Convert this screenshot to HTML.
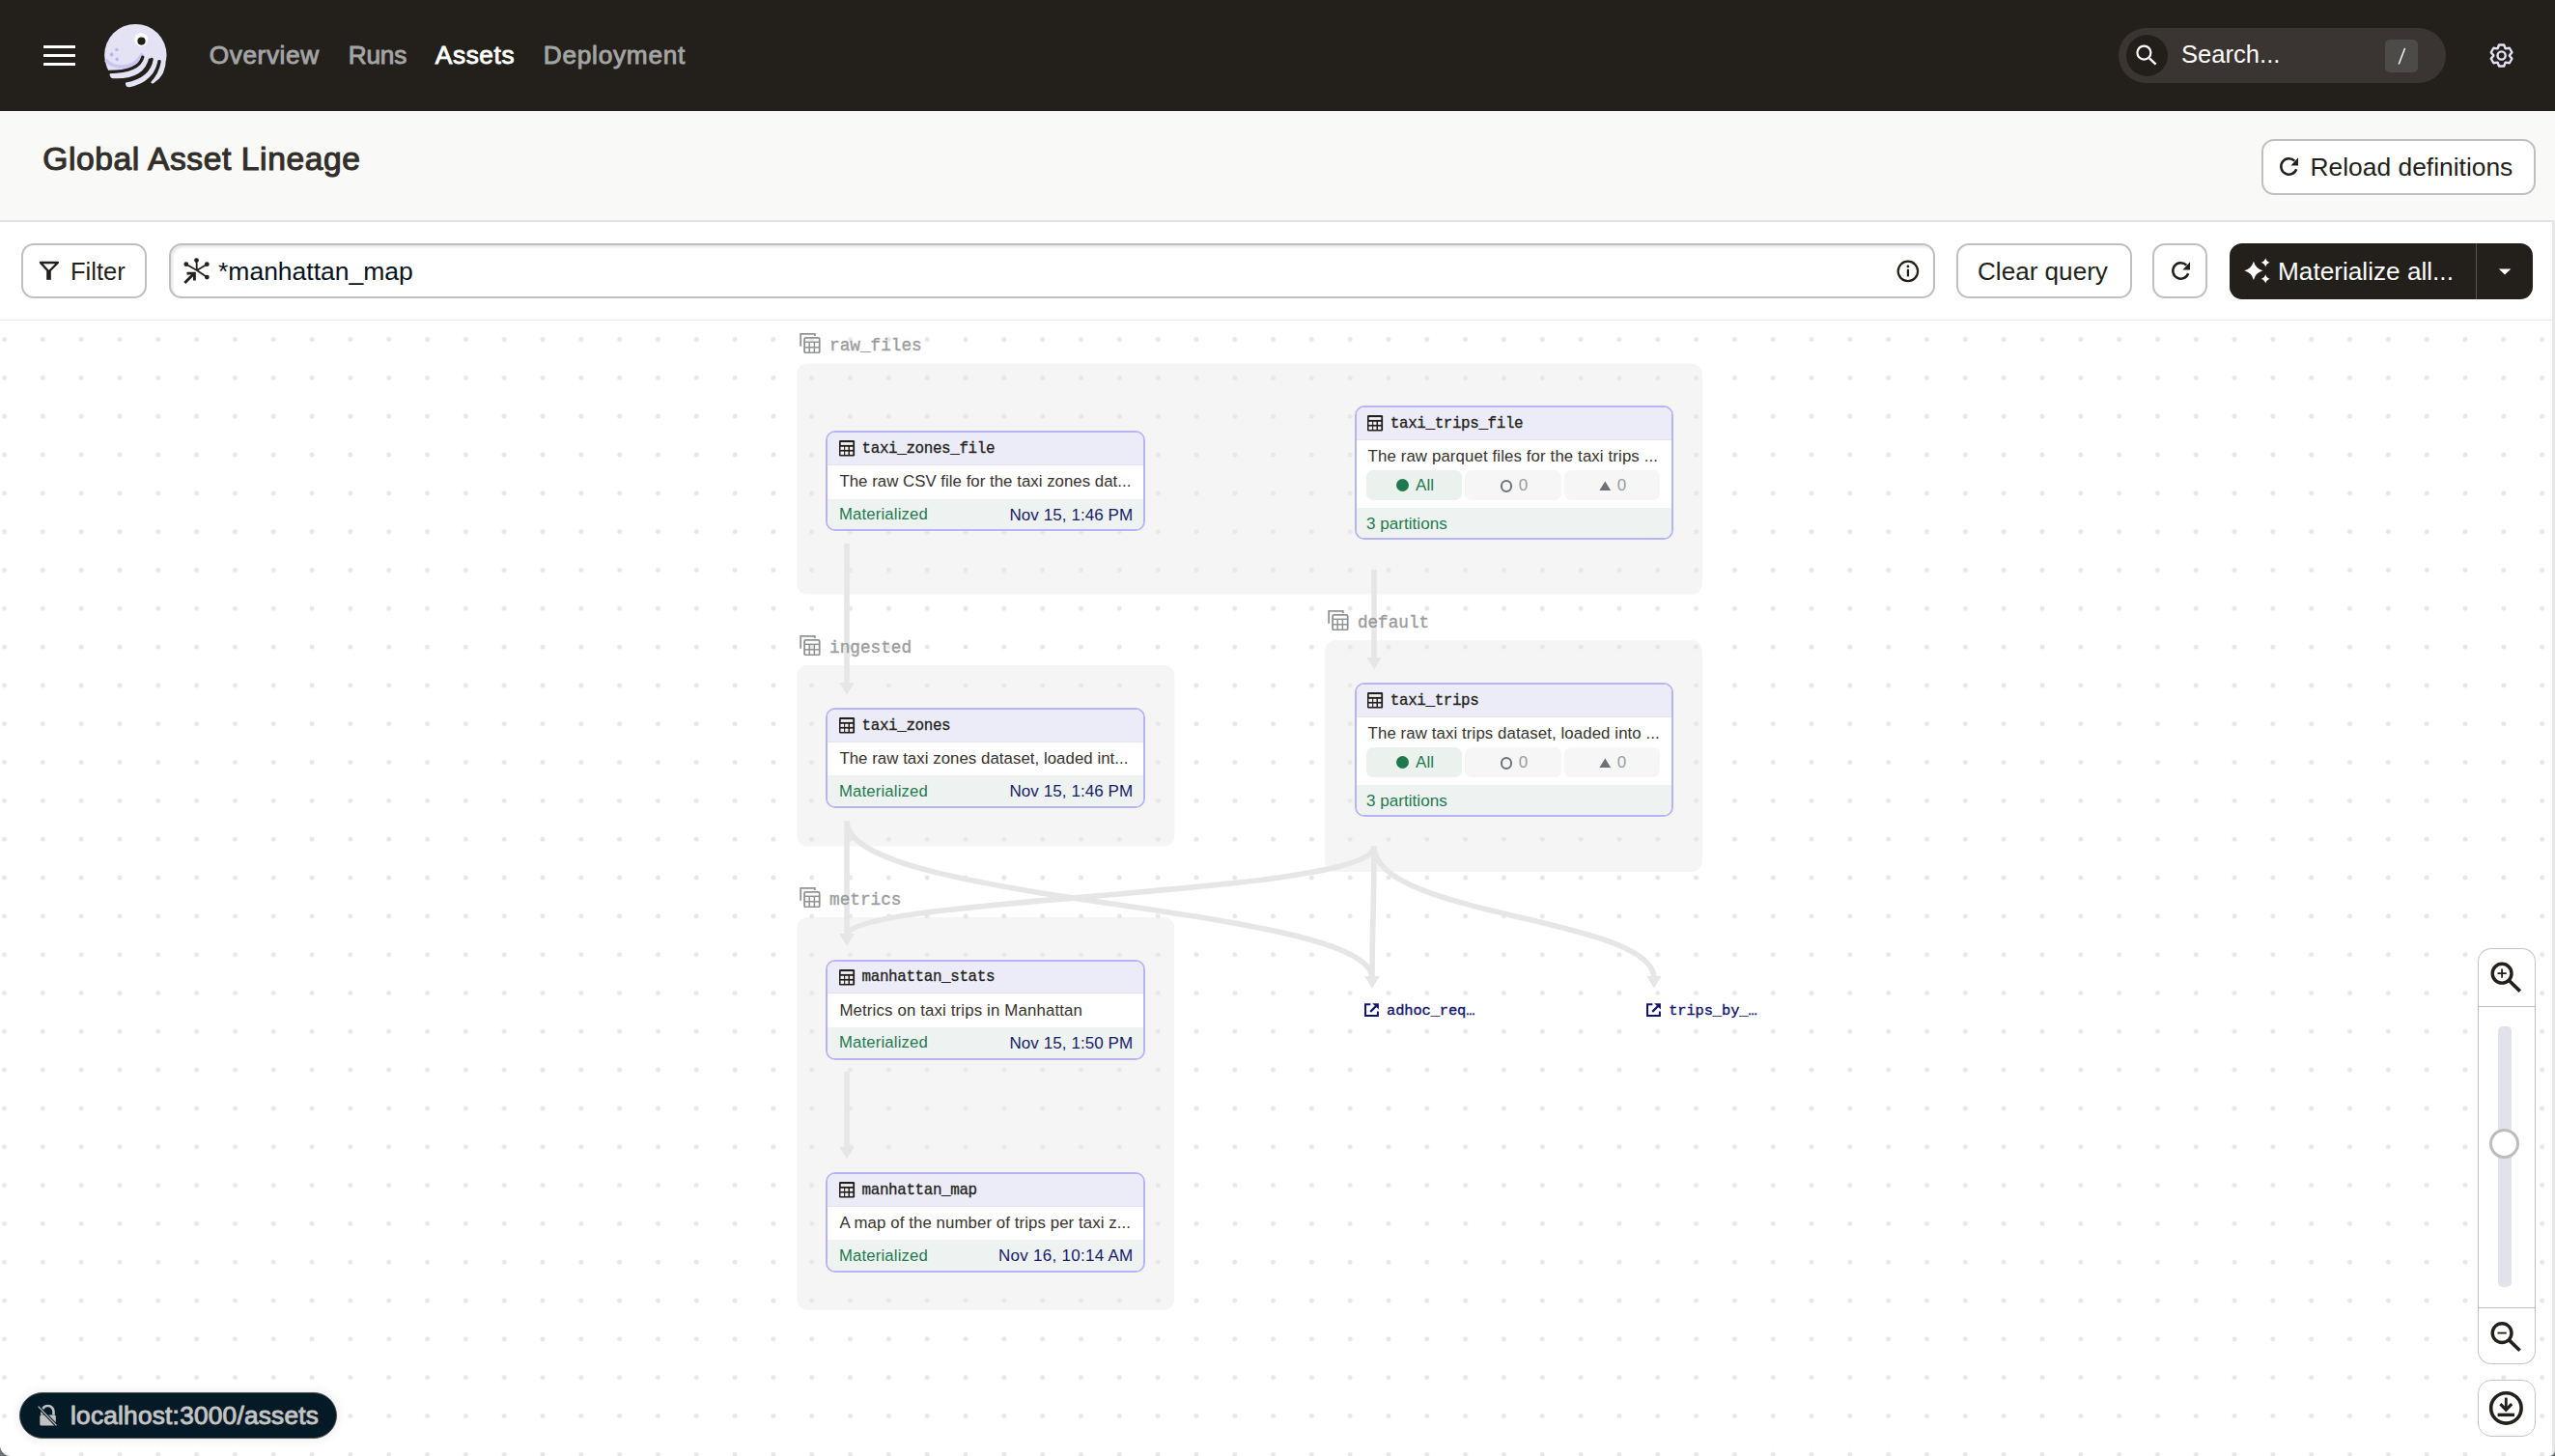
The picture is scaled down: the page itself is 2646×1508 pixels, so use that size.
<!DOCTYPE html>
<html><head><meta charset="utf-8"><title>Global Asset Lineage</title>
<style>
html,body{margin:0;padding:0;width:2646px;height:1508px;overflow:hidden;background:#fff}
body{position:relative;font-family:"Liberation Sans", sans-serif}
.t{position:absolute;white-space:nowrap;line-height:1}
.s{font-family:"Liberation Sans", sans-serif}
.m{font-family:"Liberation Mono", monospace}
</style></head><body>
<div style="position:absolute;left:0;top:0;width:2646px;height:115px;background:#231F1B"></div>
<div style="position:absolute;left:45px;top:46.7px;width:33px;height:3.3px;background:#fff;border-radius:0.5px"></div>
<div style="position:absolute;left:45px;top:55.8px;width:33px;height:3.3px;background:#fff;border-radius:0.5px"></div>
<div style="position:absolute;left:45px;top:64.8px;width:33px;height:3.3px;background:#fff;border-radius:0.5px"></div>
<svg style="position:absolute;left:100px;top:18px" width="80" height="80" viewBox="0 0 80 80">
<defs><clipPath id="lbody"><path d="M0 0 L80 0 L80 44 L65.1 45 L57.1 43 L47.8 41.2 C 45.5 50, 36 56.5, 13 56.5 L0 56.5 Z"/></clipPath>
<clipPath id="lcirc"><circle cx="40.35" cy="39.1" r="34.5"/></clipPath></defs>
<circle cx="40.35" cy="39.1" r="32.2" fill="#E4E3F4" clip-path="url(#lbody)"/>
<g clip-path="url(#lcirc)" fill="none" stroke="#E4E3F4" stroke-linecap="round" stroke-width="7.2">
<path d="M51 40 C 48.5 53, 38 60.5, 17.2 59.6"/>
<path d="M60.5 42 C 58.8 56, 49 66, 33.6 68.6"/>
<path d="M68.4 42 C 68.2 53, 64 61, 59.2 65.4"/>
</g>
<path d="M9.5 44 C 18 53.5, 38 55.5, 47.5 37.5" fill="none" stroke="#CAC5F3" stroke-width="3.6" clip-path="url(#lbody)"/>
<g fill="none" stroke="#231F1B" stroke-linecap="round" stroke-width="3.3">
<path d="M47.8 41.2 C 45.5 50, 36 56.5, 13 56.5"/>
<path d="M57.1 43.4 C 55 56, 45 63, 30 66"/>
<path d="M65.1 45.6 C 63.5 55, 60 61, 54 67"/>
</g>
<circle cx="46.2" cy="23.2" r="7" fill="#fff"/>
<circle cx="46.5" cy="24.6" r="4.1" fill="#231F1B"/>
<circle cx="20.9" cy="33.5" r="1.8" fill="#B9B3F0"/><circle cx="15.7" cy="38.5" r="1.9" fill="#B9B3F0"/><circle cx="21.2" cy="43.4" r="1.8" fill="#B9B3F0"/>
</svg>
<div class="t s" style="left:216.80px;top:43.72px;font-size:26.2px;color:#A3A5A5;font-weight:400;-webkit-text-stroke:0.9px #A3A5A5;letter-spacing:0.59px;">Overview</div>
<div class="t s" style="left:360.80px;top:43.72px;font-size:26.2px;color:#A3A5A5;font-weight:400;-webkit-text-stroke:0.9px #A3A5A5;letter-spacing:-0.2px;">Runs</div>
<div class="t s" style="left:450.80px;top:43.72px;font-size:26.2px;color:#FFFFFF;font-weight:400;-webkit-text-stroke:0.9px #FFFFFF;letter-spacing:0.64px;">Assets</div>
<div class="t s" style="left:562.80px;top:43.72px;font-size:26.2px;color:#A3A5A5;font-weight:400;-webkit-text-stroke:0.9px #A3A5A5;letter-spacing:0.75px;">Deployment</div>
<div style="position:absolute;left:2194px;top:29px;width:339px;height:57px;border-radius:28.5px;background:#3A3532"></div>
<div style="position:absolute;left:2202px;top:36px;width:43px;height:43px;border-radius:50%;background:#221F1B"></div>
<svg style="position:absolute;left:2195px;top:30px" width="60" height="56" viewBox="0 0 60 56">
<circle cx="25.4" cy="24.6" r="7" fill="none" stroke="#fff" stroke-width="2.2"/>
<path d="M31 30.3 L37.6 36.6" stroke="#fff" stroke-width="2.4" stroke-linecap="butt"/></svg>
<div class="t s" style="left:2259.00px;top:43.72px;font-size:25.6px;color:#FFFFFF;font-weight:400;">Search...</div>
<div style="position:absolute;left:2470px;top:41px;width:34px;height:34px;border-radius:5px;background:#4D4B49"></div>
<svg style="position:absolute;left:2470px;top:41px" width="34" height="34"><path d="M20.6 9 L14.2 25.5" stroke="#fff" stroke-width="1.4"/></svg>
<svg style="position:absolute;left:2570px;top:37px" width="40" height="40" viewBox="0 0 40 40">
<path d="M16.61 13.22 L18.02 9.50 L23.18 9.50 L24.59 13.22 L24.91 13.41 L28.84 12.77 L31.42 17.23 L28.90 20.31 L28.90 20.69 L31.42 23.77 L28.84 28.23 L24.91 27.59 L24.59 27.78 L23.18 31.50 L18.02 31.50 L16.61 27.78 L16.29 27.59 L12.36 28.23 L9.78 23.77 L12.30 20.69 L12.30 20.31 L9.78 17.23 L12.36 12.77 L16.29 13.41 Z" fill="none" stroke="#E4E3F5" stroke-width="2.4" stroke-linejoin="round"/>
<circle cx="20.6" cy="20.5" r="4.1" fill="none" stroke="#E4E3F5" stroke-width="2.4"/></svg>
<div style="position:absolute;left:0;top:115px;width:2646px;height:113px;background:#F9F9F7"></div>
<div style="position:absolute;left:0;top:228px;width:2646px;height:1.5px;background:#E3E3E3"></div>
<div class="t s" style="left:44.20px;top:147.95px;font-size:33.6px;color:#322E2A;font-weight:400;-webkit-text-stroke:1.1px #322E2A;letter-spacing:0.6px;">Global Asset Lineage</div>
<div style="position:absolute;left:2342px;top:144px;width:284px;height:58px;box-sizing:border-box;border:2px solid #BFBFBF;border-radius:13px;background:#fff"></div>
<svg style="position:absolute;left:2357.8px;top:160.2px" width="26" height="26" viewBox="-3 -3 26 26">
<path d="M15.3 3.65 A8.2 8.2 0 1 0 17.2 12.25" fill="none" stroke="#231F1B" stroke-width="2.5"/>
<path d="M11.5 8.4 L19 8.4 L19 0.3 Z" fill="#231F1B"/></svg>
<div class="t s" style="left:2392.50px;top:159.65px;font-size:26.4px;color:#231F1B;font-weight:400;">Reload definitions</div>
<div style="position:absolute;left:0;top:229.5px;width:2643px;height:102px;background:#fff"></div>
<div style="position:absolute;left:0;top:330.5px;width:2643px;height:1.5px;background:#E6E6E6"></div>
<div style="position:absolute;left:2643px;top:228px;width:3px;height:1280px;background:#E7E7E7"></div>
<div style="position:absolute;left:22px;top:252px;width:130px;height:57px;box-sizing:border-box;border:2px solid #BFBFBF;border-radius:13px;background:#fff"></div>
<svg style="position:absolute;left:30px;top:260px" width="40" height="40" viewBox="0 0 40 40">
<path d="M12 12 L29.9 12 L20.5 21.5 Z" fill="none" stroke="#231F1B" stroke-width="2.4" stroke-linejoin="round"/>
<path d="M20.5 21 L20.5 29.8" stroke="#231F1B" stroke-width="4.6"/></svg>
<div class="t s" style="left:73.00px;top:268.91px;font-size:25.5px;color:#231F1B;font-weight:400;">Filter</div>
<div style="position:absolute;left:175px;top:252px;width:1829px;height:57px;box-sizing:border-box;border:2px solid #BFBFBF;border-radius:13px;background:#fff;box-shadow:inset 2px 2px 3px rgba(0,0,0,0.10)"></div>
<svg style="position:absolute;left:180px;top:260px" width="50" height="40" viewBox="0 0 50 40">
<g stroke="#231F1B" stroke-width="1.8"><path d="M23.9 20 L23.5 9.6"/><path d="M23.9 20 L12.8 13.7"/><path d="M23.9 20 L34.3 13.7"/><path d="M23.9 20 L34.3 27.1"/></g>
<g fill="#231F1B"><circle cx="23.5" cy="9.6" r="2.4"/><circle cx="12.8" cy="13.7" r="2.4"/><circle cx="34.3" cy="13.7" r="2.4"/><circle cx="34.3" cy="27.1" r="2.4"/></g>
<path d="M11.3 33 L20.5 23.8" stroke="#231F1B" stroke-width="2.9"/>
<path d="M13.5 23.1 L21.4 23.1 L21.4 30.5" fill="none" stroke="#231F1B" stroke-width="2.9"/></svg>
<div class="t s" style="left:226.00px;top:268.16px;font-size:26.5px;color:#06121C;font-weight:400;">*manhattan_map</div>
<svg style="position:absolute;left:1964px;top:269px" width="24" height="24" viewBox="0 0 24 24">
<circle cx="11.9" cy="11.9" r="10.2" fill="none" stroke="#231F1B" stroke-width="2.2"/>
<rect x="10.8" y="9.8" width="2.3" height="7.6" fill="#231F1B"/><circle cx="11.95" cy="6.9" r="1.4" fill="#231F1B"/></svg>
<div style="position:absolute;left:2026px;top:252px;width:182px;height:57px;box-sizing:border-box;border:2px solid #BFBFBF;border-radius:13px;background:#fff"></div>
<div class="t s" style="left:2048.00px;top:268.20px;font-size:26.1px;color:#231F1B;font-weight:400;">Clear query</div>
<div style="position:absolute;left:2229px;top:252px;width:57px;height:57px;box-sizing:border-box;border:2px solid #BFBFBF;border-radius:13px;background:#fff"></div>
<svg style="position:absolute;left:2246.2px;top:267.9px" width="26" height="26" viewBox="-3 -3 26 26">
<path d="M15.3 3.65 A8.2 8.2 0 1 0 17.2 12.25" fill="none" stroke="#231F1B" stroke-width="2.5"/>
<path d="M11.5 8.4 L19 8.4 L19 0.3 Z" fill="#231F1B"/></svg>
<div style="position:absolute;left:2309px;top:252px;width:314px;height:58px;border-radius:13px;background:#231F1B"></div>
<div style="position:absolute;left:2563.5px;top:252px;width:1px;height:58px;background:#57534F"></div>
<svg style="position:absolute;left:2320px;top:266px" width="36" height="32" viewBox="0 0 36 32"><path d="M13.90 4.70 Q16.01 12.19 23.50 14.30 Q16.01 16.41 13.90 23.90 Q11.79 16.41 4.30 14.30 Q11.79 12.19 13.90 4.70 Z" fill="#fff"/><path d="M26.20 1.20 Q27.21 4.79 30.80 5.80 Q27.21 6.81 26.20 10.40 Q25.19 6.81 21.60 5.80 Q25.19 4.79 26.20 1.20 Z" fill="#fff"/><path d="M26.20 18.20 Q27.21 21.79 30.80 22.80 Q27.21 23.81 26.20 27.40 Q25.19 23.81 21.60 22.80 Q25.19 21.79 26.20 18.20 Z" fill="#fff"/></svg>
<div class="t s" style="left:2359.00px;top:268.12px;font-size:26.2px;color:#FFFFFF;font-weight:400;">Materialize all...</div>
<svg style="position:absolute;left:2584px;top:274px" width="20" height="14"><path d="M3.8 4.6 L16.4 4.6 L10.1 10.4 Z" fill="#fff"/></svg>
<svg style="position:absolute;left:0;top:332px" width="2643" height="1176" viewBox="0 332 2643 1176">
<defs><pattern id="dots" patternUnits="userSpaceOnUse" x="-15.4" y="331.6" width="39.82" height="39.82">
<circle cx="19.9" cy="19.9" r="2.5" fill="#E7E7E7"/></pattern></defs>
<rect x="0" y="332" width="2643" height="1176" fill="#fff"/>
<g fill="#F5F5F5">
<rect x="825.3" y="376.4" width="937.6" height="239.2" rx="11"/>
<rect x="825.3" y="689.1" width="391" height="187.5" rx="11"/>
<rect x="1372.1" y="663.3" width="390.8" height="239.6" rx="11"/>
<rect x="825.3" y="950" width="390.8" height="406.7" rx="11"/>
</g>
<rect x="0" y="332" width="2643" height="1176" fill="url(#dots)"/>

<path d="M877 563 L877 709.5" stroke="#E6E6E6" stroke-width="5.6" fill="none"/><path d="M869.3 707.0 L884.7 707.0 L877 719.5 Z" fill="#E6E6E6"/>
<path d="M1423 590 L1423 683.4" stroke="#E6E6E6" stroke-width="5.6" fill="none"/><path d="M1415.3 680.9 L1430.7 680.9 L1423 693.4 Z" fill="#E6E6E6"/>
<path d="M877 850.5 L877 969.5" stroke="#E6E6E6" stroke-width="5.6" fill="none"/><path d="M869.3 967.0 L884.7 967.0 L877 979.5 Z" fill="#E6E6E6"/>
<path d="M877 1110 L877 1190.3" stroke="#E6E6E6" stroke-width="5.6" fill="none"/><path d="M869.3 1187.8 L884.7 1187.8 L877 1200.3 Z" fill="#E6E6E6"/>
<path d="M877 850.5 C877 936.95, 1421 936.95, 1421 1013.4" stroke="#E6E6E6" stroke-width="5.6" fill="none"/><path d="M1413.3 1010.9 L1428.7 1010.9 L1421 1023.4 Z" fill="#E6E6E6"/>
<path d="M1423 876.5 C1423 928.0, 877 928.0, 877 969.5" stroke="#E6E6E6" stroke-width="5.6" fill="none"/><path d="M869.3 967.0 L884.7 967.0 L877 979.5 Z" fill="#E6E6E6"/>
<path d="M1423 876.5 C1423 949.95, 1421 949.95, 1421 1013.4" stroke="#E6E6E6" stroke-width="5.6" fill="none"/><path d="M1413.3 1010.9 L1428.7 1010.9 L1421 1023.4 Z" fill="#E6E6E6"/>
<path d="M1423 876.5 C1423 949.95, 1713 949.95, 1713 1013.4" stroke="#E6E6E6" stroke-width="5.6" fill="none"/><path d="M1705.3 1010.9 L1720.7 1010.9 L1713 1023.4 Z" fill="#E6E6E6"/>
</svg>
<svg style="position:absolute;left:827.8px;top:344.4px" width="22" height="22" viewBox="0 0 22 22">
<path d="M1.2 14.8 L1.2 1.9 L15.8 1.9 L15.8 4" fill="none" stroke="#919393" stroke-width="1.8"/>
<rect x="5.1" y="5.8" width="15.6" height="15.6" rx="1.5" fill="none" stroke="#919393" stroke-width="1.8"/>
<g stroke="#919393" stroke-width="1.5"><path d="M5.1 10.3 L20.7 10.3"/><path d="M5.1 15.8 L20.7 15.8"/><path d="M10.2 10.3 L10.2 21.4"/><path d="M15.4 10.3 L15.4 21.4"/></g></svg>
<div class="t m" style="left:859.10px;top:350.14px;font-size:17.7px;color:#9A9C9C;font-weight:400;-webkit-text-stroke:0.35px #9A9C9C;">raw_files</div>
<svg style="position:absolute;left:827.8px;top:657.1px" width="22" height="22" viewBox="0 0 22 22">
<path d="M1.2 14.8 L1.2 1.9 L15.8 1.9 L15.8 4" fill="none" stroke="#919393" stroke-width="1.8"/>
<rect x="5.1" y="5.8" width="15.6" height="15.6" rx="1.5" fill="none" stroke="#919393" stroke-width="1.8"/>
<g stroke="#919393" stroke-width="1.5"><path d="M5.1 10.3 L20.7 10.3"/><path d="M5.1 15.8 L20.7 15.8"/><path d="M10.2 10.3 L10.2 21.4"/><path d="M15.4 10.3 L15.4 21.4"/></g></svg>
<div class="t m" style="left:859.10px;top:662.84px;font-size:17.7px;color:#9A9C9C;font-weight:400;-webkit-text-stroke:0.35px #9A9C9C;">ingested</div>
<svg style="position:absolute;left:1374.6px;top:631.3px" width="22" height="22" viewBox="0 0 22 22">
<path d="M1.2 14.8 L1.2 1.9 L15.8 1.9 L15.8 4" fill="none" stroke="#919393" stroke-width="1.8"/>
<rect x="5.1" y="5.8" width="15.6" height="15.6" rx="1.5" fill="none" stroke="#919393" stroke-width="1.8"/>
<g stroke="#919393" stroke-width="1.5"><path d="M5.1 10.3 L20.7 10.3"/><path d="M5.1 15.8 L20.7 15.8"/><path d="M10.2 10.3 L10.2 21.4"/><path d="M15.4 10.3 L15.4 21.4"/></g></svg>
<div class="t m" style="left:1405.90px;top:637.04px;font-size:17.7px;color:#9A9C9C;font-weight:400;-webkit-text-stroke:0.35px #9A9C9C;">default</div>
<svg style="position:absolute;left:827.8px;top:918.0px" width="22" height="22" viewBox="0 0 22 22">
<path d="M1.2 14.8 L1.2 1.9 L15.8 1.9 L15.8 4" fill="none" stroke="#919393" stroke-width="1.8"/>
<rect x="5.1" y="5.8" width="15.6" height="15.6" rx="1.5" fill="none" stroke="#919393" stroke-width="1.8"/>
<g stroke="#919393" stroke-width="1.5"><path d="M5.1 10.3 L20.7 10.3"/><path d="M5.1 15.8 L20.7 15.8"/><path d="M10.2 10.3 L10.2 21.4"/><path d="M15.4 10.3 L15.4 21.4"/></g></svg>
<div class="t m" style="left:859.10px;top:923.74px;font-size:17.7px;color:#9A9C9C;font-weight:400;-webkit-text-stroke:0.35px #9A9C9C;">metrics</div>
<div style="position:absolute;left:855.4px;top:446.4px;width:330.5px;height:104.0px;box-sizing:border-box;border:2.4px solid #B8B3F5;border-radius:10px;overflow:hidden;background:#fff">
<div style="position:absolute;left:0;top:0;right:0;height:32.6px;background:#ECEBF8;border-bottom:1px solid #E4E3F0"></div>
<div style="position:absolute;left:0;top:68.2px;right:0;bottom:0;background:#EEF3F1"></div>
</div>
<svg style="position:absolute;left:868.6px;top:456.3px" width="17" height="17" viewBox="0 0 17 17">
<rect x="0" y="0" width="16.1" height="16.5" rx="1.3" fill="#231F1B"/>
<g fill="#F2F1FA"><rect x="1.7" y="2.1" width="12.6" height="2.8"/>
<rect x="1.5" y="6.8" width="3.6" height="3.1"/><rect x="6.2" y="6.8" width="3.3" height="3.1"/><rect x="11" y="6.8" width="3.3" height="3.1"/>
<rect x="1.5" y="11.6" width="3.6" height="3.3"/><rect x="6.2" y="11.6" width="3.3" height="3.3"/><rect x="11" y="11.6" width="3.3" height="3.3"/></g></svg>
<div class="t m" style="left:892.60px;top:457.82px;font-size:15.9px;color:#231F1B;font-weight:400;letter-spacing:-0.37px;-webkit-text-stroke:0.3px #231F1B;">taxi_zones_file</div>
<div class="t s" style="left:869.40px;top:491.18px;font-size:16.8px;color:#36322E;font-weight:400;letter-spacing:0.04px;">The raw CSV file for the taxi zones dat...</div>
<div class="t s" style="left:869.00px;top:524.86px;font-size:16.7px;color:#1E7A4E;font-weight:400;letter-spacing:0.16px;">Materialized</div>
<div class="t s" style="right:1472.72px;top:524.61px;font-size:17px;color:#171B6C;letter-spacing:0.08px">Nov 15, 1:46 PM</div>
<div style="position:absolute;left:855.4px;top:733.2px;width:330.5px;height:104.0px;box-sizing:border-box;border:2.4px solid #B8B3F5;border-radius:10px;overflow:hidden;background:#fff">
<div style="position:absolute;left:0;top:0;right:0;height:32.6px;background:#ECEBF8;border-bottom:1px solid #E4E3F0"></div>
<div style="position:absolute;left:0;top:68.2px;right:0;bottom:0;background:#EEF3F1"></div>
</div>
<svg style="position:absolute;left:868.6px;top:743.1px" width="17" height="17" viewBox="0 0 17 17">
<rect x="0" y="0" width="16.1" height="16.5" rx="1.3" fill="#231F1B"/>
<g fill="#F2F1FA"><rect x="1.7" y="2.1" width="12.6" height="2.8"/>
<rect x="1.5" y="6.8" width="3.6" height="3.1"/><rect x="6.2" y="6.8" width="3.3" height="3.1"/><rect x="11" y="6.8" width="3.3" height="3.1"/>
<rect x="1.5" y="11.6" width="3.6" height="3.3"/><rect x="6.2" y="11.6" width="3.3" height="3.3"/><rect x="11" y="11.6" width="3.3" height="3.3"/></g></svg>
<div class="t m" style="left:892.60px;top:744.62px;font-size:15.9px;color:#231F1B;font-weight:400;letter-spacing:-0.37px;-webkit-text-stroke:0.3px #231F1B;">taxi_zones</div>
<div class="t s" style="left:869.40px;top:777.98px;font-size:16.8px;color:#36322E;font-weight:400;letter-spacing:0.06px;">The raw taxi zones dataset, loaded int...</div>
<div class="t s" style="left:869.00px;top:811.66px;font-size:16.7px;color:#1E7A4E;font-weight:400;letter-spacing:0.16px;">Materialized</div>
<div class="t s" style="right:1472.72px;top:811.41px;font-size:17px;color:#171B6C;letter-spacing:0.08px">Nov 15, 1:46 PM</div>
<div style="position:absolute;left:855.4px;top:993.9px;width:330.5px;height:104.0px;box-sizing:border-box;border:2.4px solid #B8B3F5;border-radius:10px;overflow:hidden;background:#fff">
<div style="position:absolute;left:0;top:0;right:0;height:32.6px;background:#ECEBF8;border-bottom:1px solid #E4E3F0"></div>
<div style="position:absolute;left:0;top:68.2px;right:0;bottom:0;background:#EEF3F1"></div>
</div>
<svg style="position:absolute;left:868.6px;top:1003.8px" width="17" height="17" viewBox="0 0 17 17">
<rect x="0" y="0" width="16.1" height="16.5" rx="1.3" fill="#231F1B"/>
<g fill="#F2F1FA"><rect x="1.7" y="2.1" width="12.6" height="2.8"/>
<rect x="1.5" y="6.8" width="3.6" height="3.1"/><rect x="6.2" y="6.8" width="3.3" height="3.1"/><rect x="11" y="6.8" width="3.3" height="3.1"/>
<rect x="1.5" y="11.6" width="3.6" height="3.3"/><rect x="6.2" y="11.6" width="3.3" height="3.3"/><rect x="11" y="11.6" width="3.3" height="3.3"/></g></svg>
<div class="t m" style="left:892.60px;top:1005.32px;font-size:15.9px;color:#231F1B;font-weight:400;letter-spacing:-0.37px;-webkit-text-stroke:0.3px #231F1B;">manhattan_stats</div>
<div class="t s" style="left:869.40px;top:1038.68px;font-size:16.8px;color:#36322E;font-weight:400;letter-spacing:0.16px;">Metrics on taxi trips in Manhattan</div>
<div class="t s" style="left:869.00px;top:1072.36px;font-size:16.7px;color:#1E7A4E;font-weight:400;letter-spacing:0.16px;">Materialized</div>
<div class="t s" style="right:1472.72px;top:1072.11px;font-size:17px;color:#171B6C;letter-spacing:0.08px">Nov 15, 1:50 PM</div>
<div style="position:absolute;left:855.4px;top:1214.1px;width:330.5px;height:104.0px;box-sizing:border-box;border:2.4px solid #B8B3F5;border-radius:10px;overflow:hidden;background:#fff">
<div style="position:absolute;left:0;top:0;right:0;height:32.6px;background:#ECEBF8;border-bottom:1px solid #E4E3F0"></div>
<div style="position:absolute;left:0;top:68.2px;right:0;bottom:0;background:#EEF3F1"></div>
</div>
<svg style="position:absolute;left:868.6px;top:1224.0px" width="17" height="17" viewBox="0 0 17 17">
<rect x="0" y="0" width="16.1" height="16.5" rx="1.3" fill="#231F1B"/>
<g fill="#F2F1FA"><rect x="1.7" y="2.1" width="12.6" height="2.8"/>
<rect x="1.5" y="6.8" width="3.6" height="3.1"/><rect x="6.2" y="6.8" width="3.3" height="3.1"/><rect x="11" y="6.8" width="3.3" height="3.1"/>
<rect x="1.5" y="11.6" width="3.6" height="3.3"/><rect x="6.2" y="11.6" width="3.3" height="3.3"/><rect x="11" y="11.6" width="3.3" height="3.3"/></g></svg>
<div class="t m" style="left:892.60px;top:1225.52px;font-size:15.9px;color:#231F1B;font-weight:400;letter-spacing:-0.37px;-webkit-text-stroke:0.3px #231F1B;">manhattan_map</div>
<div class="t s" style="left:869.40px;top:1258.88px;font-size:16.8px;color:#36322E;font-weight:400;letter-spacing:0.1px;">A map of the number of trips per taxi z...</div>
<div class="t s" style="left:869.00px;top:1292.56px;font-size:16.7px;color:#1E7A4E;font-weight:400;letter-spacing:0.16px;">Materialized</div>
<div class="t s" style="right:1472.53px;top:1292.31px;font-size:17px;color:#171B6C;letter-spacing:0.27px">Nov 16, 10:14 AM</div>
<div style="position:absolute;left:1402.6px;top:420.1px;width:330.5px;height:139.2px;box-sizing:border-box;border:2.4px solid #B8B3F5;border-radius:10px;overflow:hidden;background:#fff">
<div style="position:absolute;left:0;top:0;right:0;height:32.6px;background:#ECEBF8;border-bottom:1px solid #E4E3F0"></div>
<div style="position:absolute;left:0;top:103.7px;right:0;bottom:0;background:#EEF3F1"></div>
</div>
<svg style="position:absolute;left:1415.8px;top:430.0px" width="17" height="17" viewBox="0 0 17 17">
<rect x="0" y="0" width="16.1" height="16.5" rx="1.3" fill="#231F1B"/>
<g fill="#F2F1FA"><rect x="1.7" y="2.1" width="12.6" height="2.8"/>
<rect x="1.5" y="6.8" width="3.6" height="3.1"/><rect x="6.2" y="6.8" width="3.3" height="3.1"/><rect x="11" y="6.8" width="3.3" height="3.1"/>
<rect x="1.5" y="11.6" width="3.6" height="3.3"/><rect x="6.2" y="11.6" width="3.3" height="3.3"/><rect x="11" y="11.6" width="3.3" height="3.3"/></g></svg>
<div class="t m" style="left:1439.80px;top:431.52px;font-size:15.9px;color:#231F1B;font-weight:400;letter-spacing:-0.37px;-webkit-text-stroke:0.3px #231F1B;">taxi_trips_file</div>
<div class="t s" style="left:1416.60px;top:464.88px;font-size:16.8px;color:#36322E;font-weight:400;letter-spacing:0.13px;">The raw parquet files for the taxi trips ...</div>
<div style="position:absolute;left:1414.6999999999998px;top:487.20000000000005px;width:99.6px;height:30.7px;border-radius:7px;background:#EBF2EE"></div>
<div style="position:absolute;left:1517.1999999999998px;top:487.20000000000005px;width:99.4px;height:30.7px;border-radius:7px;background:#F6F6F6"></div>
<div style="position:absolute;left:1619.5px;top:487.20000000000005px;width:99.6px;height:30.7px;border-radius:7px;background:#F6F6F6"></div>
<div style="position:absolute;left:1446.3999999999999px;top:496.20000000000005px;width:13px;height:13px;border-radius:50%;background:#1E7A4E"></div>
<div class="t s" style="left:1466.10px;top:494.01px;font-size:17.0px;color:#1E7A4E;font-weight:400;">All</div>
<div style="position:absolute;left:1553.5px;top:497.0px;width:12.9px;height:12.9px;box-sizing:border-box;border:2.8px solid #6B7177;border-radius:50%"></div>
<div class="t s" style="left:1572.80px;top:494.01px;font-size:17.0px;color:#979CA0;font-weight:400;">0</div>
<svg style="position:absolute;left:1655.6px;top:498.1px" width="13" height="11"><path d="M6.3 0.5 L12.2 10 L0.4 10 Z" fill="#6B7177"/></svg>
<div class="t s" style="left:1674.70px;top:494.01px;font-size:17.0px;color:#979CA0;font-weight:400;">0</div>
<div class="t s" style="left:1415.10px;top:534.22px;font-size:17.1px;color:#1E7A4E;font-weight:400;">3 partitions</div>
<div style="position:absolute;left:1402.6px;top:707.2px;width:330.5px;height:139.2px;box-sizing:border-box;border:2.4px solid #B8B3F5;border-radius:10px;overflow:hidden;background:#fff">
<div style="position:absolute;left:0;top:0;right:0;height:32.6px;background:#ECEBF8;border-bottom:1px solid #E4E3F0"></div>
<div style="position:absolute;left:0;top:103.7px;right:0;bottom:0;background:#EEF3F1"></div>
</div>
<svg style="position:absolute;left:1415.8px;top:717.1px" width="17" height="17" viewBox="0 0 17 17">
<rect x="0" y="0" width="16.1" height="16.5" rx="1.3" fill="#231F1B"/>
<g fill="#F2F1FA"><rect x="1.7" y="2.1" width="12.6" height="2.8"/>
<rect x="1.5" y="6.8" width="3.6" height="3.1"/><rect x="6.2" y="6.8" width="3.3" height="3.1"/><rect x="11" y="6.8" width="3.3" height="3.1"/>
<rect x="1.5" y="11.6" width="3.6" height="3.3"/><rect x="6.2" y="11.6" width="3.3" height="3.3"/><rect x="11" y="11.6" width="3.3" height="3.3"/></g></svg>
<div class="t m" style="left:1439.80px;top:718.62px;font-size:15.9px;color:#231F1B;font-weight:400;letter-spacing:-0.37px;-webkit-text-stroke:0.3px #231F1B;">taxi_trips</div>
<div class="t s" style="left:1416.60px;top:751.98px;font-size:16.8px;color:#36322E;font-weight:400;letter-spacing:0.11px;">The raw taxi trips dataset, loaded into ...</div>
<div style="position:absolute;left:1414.6999999999998px;top:774.3000000000001px;width:99.6px;height:30.7px;border-radius:7px;background:#EBF2EE"></div>
<div style="position:absolute;left:1517.1999999999998px;top:774.3000000000001px;width:99.4px;height:30.7px;border-radius:7px;background:#F6F6F6"></div>
<div style="position:absolute;left:1619.5px;top:774.3000000000001px;width:99.6px;height:30.7px;border-radius:7px;background:#F6F6F6"></div>
<div style="position:absolute;left:1446.3999999999999px;top:783.3000000000001px;width:13px;height:13px;border-radius:50%;background:#1E7A4E"></div>
<div class="t s" style="left:1466.10px;top:781.11px;font-size:17.0px;color:#1E7A4E;font-weight:400;">All</div>
<div style="position:absolute;left:1553.5px;top:784.1px;width:12.9px;height:12.9px;box-sizing:border-box;border:2.8px solid #6B7177;border-radius:50%"></div>
<div class="t s" style="left:1572.80px;top:781.11px;font-size:17.0px;color:#979CA0;font-weight:400;">0</div>
<svg style="position:absolute;left:1655.6px;top:785.2px" width="13" height="11"><path d="M6.3 0.5 L12.2 10 L0.4 10 Z" fill="#6B7177"/></svg>
<div class="t s" style="left:1674.70px;top:781.11px;font-size:17.0px;color:#979CA0;font-weight:400;">0</div>
<div class="t s" style="left:1415.10px;top:821.32px;font-size:17.1px;color:#1E7A4E;font-weight:400;">3 partitions</div>
<svg style="position:absolute;left:1412.0px;top:1037.6px" width="18" height="18" viewBox="0 0 18 18">
<path d="M7.4 2.27 L2.04 2.27 L2.04 14.1 L14.9 14.1 L14.9 9.6" fill="none" stroke="#10136E" stroke-width="2"/>
<path d="M7.2 9.9 L13.6 3.5" stroke="#10136E" stroke-width="2.2"/><path d="M9.2 1.3 L15.9 1.3 L15.9 7.6 Z" fill="#10136E"/></svg>
<div class="t m" style="left:1436.00px;top:1039.70px;font-size:15.4px;color:#10136E;font-weight:400;letter-spacing:-0.1px;-webkit-text-stroke:0.35px #10136E;">adhoc_req…</div>
<svg style="position:absolute;left:1704.2px;top:1037.6px" width="18" height="18" viewBox="0 0 18 18">
<path d="M7.4 2.27 L2.04 2.27 L2.04 14.1 L14.9 14.1 L14.9 9.6" fill="none" stroke="#10136E" stroke-width="2"/>
<path d="M7.2 9.9 L13.6 3.5" stroke="#10136E" stroke-width="2.2"/><path d="M9.2 1.3 L15.9 1.3 L15.9 7.6 Z" fill="#10136E"/></svg>
<div class="t m" style="left:1728.20px;top:1039.70px;font-size:15.4px;color:#10136E;font-weight:400;letter-spacing:-0.1px;-webkit-text-stroke:0.35px #10136E;">trips_by_…</div>
<div style="position:absolute;left:2566px;top:982px;width:60px;height:60px;box-sizing:border-box;border:1.2px solid #C4C4C4;border-bottom:none;border-radius:14px 14px 0 0;background:#fff"></div>
<div style="position:absolute;left:2566px;top:1354px;width:60px;height:59px;box-sizing:border-box;border:1.2px solid #C4C4C4;border-top:none;border-radius:0 0 14px 14px;background:#fff"></div>
<div style="position:absolute;left:2565.5px;top:1041.5px;width:60px;height:313px;box-sizing:border-box;border:1.8px solid #BDBDBD;background:#fff"></div>
<div style="position:absolute;left:2587px;top:1063px;width:14px;height:270px;border-radius:5px;background:#E2E2EC"></div>
<div style="position:absolute;left:2578.4px;top:1168.9px;width:31px;height:31px;box-sizing:border-box;border:3px solid #BDBDBD;border-radius:50%;background:#fff"></div>
<svg style="position:absolute;left:2570px;top:988px" width="50" height="50" viewBox="0 0 50 50">
<circle cx="21.1" cy="20.2" r="9.9" fill="none" stroke="#231F1B" stroke-width="3.4"/>
<path d="M28.4 27.5 L39.8 38.6" stroke="#231F1B" stroke-width="3.6"/>
<path d="M16.5 20.2 L25.7 20.2 M21.1 15.6 L21.1 24.8" stroke="#231F1B" stroke-width="1.8"/></svg>
<svg style="position:absolute;left:2570px;top:1361px" width="50" height="50" viewBox="0 0 50 50">
<circle cx="21.1" cy="19.6" r="9.9" fill="none" stroke="#231F1B" stroke-width="3.4"/>
<path d="M28.4 26.9 L39.6 37.8" stroke="#231F1B" stroke-width="3.6"/>
<path d="M16.5 19.6 L25.7 19.6" stroke="#231F1B" stroke-width="1.8"/></svg>
<div style="position:absolute;left:2566px;top:1429px;width:60px;height:59px;box-sizing:border-box;border:1.2px solid #C4C4C4;border-radius:14px;background:#fff"></div>
<svg style="position:absolute;left:2570px;top:1433px" width="50" height="50" viewBox="0 0 50 50">
<circle cx="25.4" cy="25.4" r="15.7" fill="none" stroke="#231F1B" stroke-width="3.6"/>
<path d="M25.3 14.6 L25.3 27" stroke="#231F1B" stroke-width="2.8"/><path d="M19.4 21.2 L25.3 27.2 L31.2 21.2" fill="none" stroke="#231F1B" stroke-width="3.2"/>
<path d="M16.6 32.4 L34 32.4" stroke="#231F1B" stroke-width="3.4"/></svg>
<div style="position:absolute;left:20px;top:1442px;width:329px;height:48px;box-sizing:border-box;border:1.3px solid #4F4F4F;border-radius:24px;background:#041A26;box-shadow:0 0 12px rgba(0,0,0,0.10)"></div>
<svg style="position:absolute;left:36px;top:1452px" width="28" height="28" viewBox="0 0 28 28">
<path d="M7.5 13.5 L7.5 10 A6 6 0 0 1 19.5 10 L19.5 13.5" fill="none" stroke="#C2C2C2" stroke-width="2.6"/>
<rect x="5.3" y="13.5" width="16.5" height="11" rx="1.5" fill="#C2C2C2"/>
<path d="M3.6 4.6 L22.5 24.4" stroke="#041A26" stroke-width="3.5"/><path d="M3.6 4.6 L22.5 24.4" stroke="#C2C2C2" stroke-width="1.3"/></svg>
<div class="t s" style="left:73.00px;top:1452.82px;font-size:26.2px;color:#C4C4C4;font-weight:400;-webkit-text-stroke:0.95px #C4C4C4;letter-spacing:0.25px;">localhost:3000/assets</div>
<svg style="position:absolute;left:0;top:1497px" width="11" height="11" viewBox="0 0 11 11"><path d="M0 0 A11 11 0 0 0 11 11 L0 11 Z" fill="#6E7276"/></svg>
<svg style="position:absolute;left:2640px;top:1502px" width="6" height="6" viewBox="0 0 6 6"><path d="M6 0 A6 6 0 0 1 0 6 L6 6 Z" fill="#6E7276"/></svg>
</body></html>
